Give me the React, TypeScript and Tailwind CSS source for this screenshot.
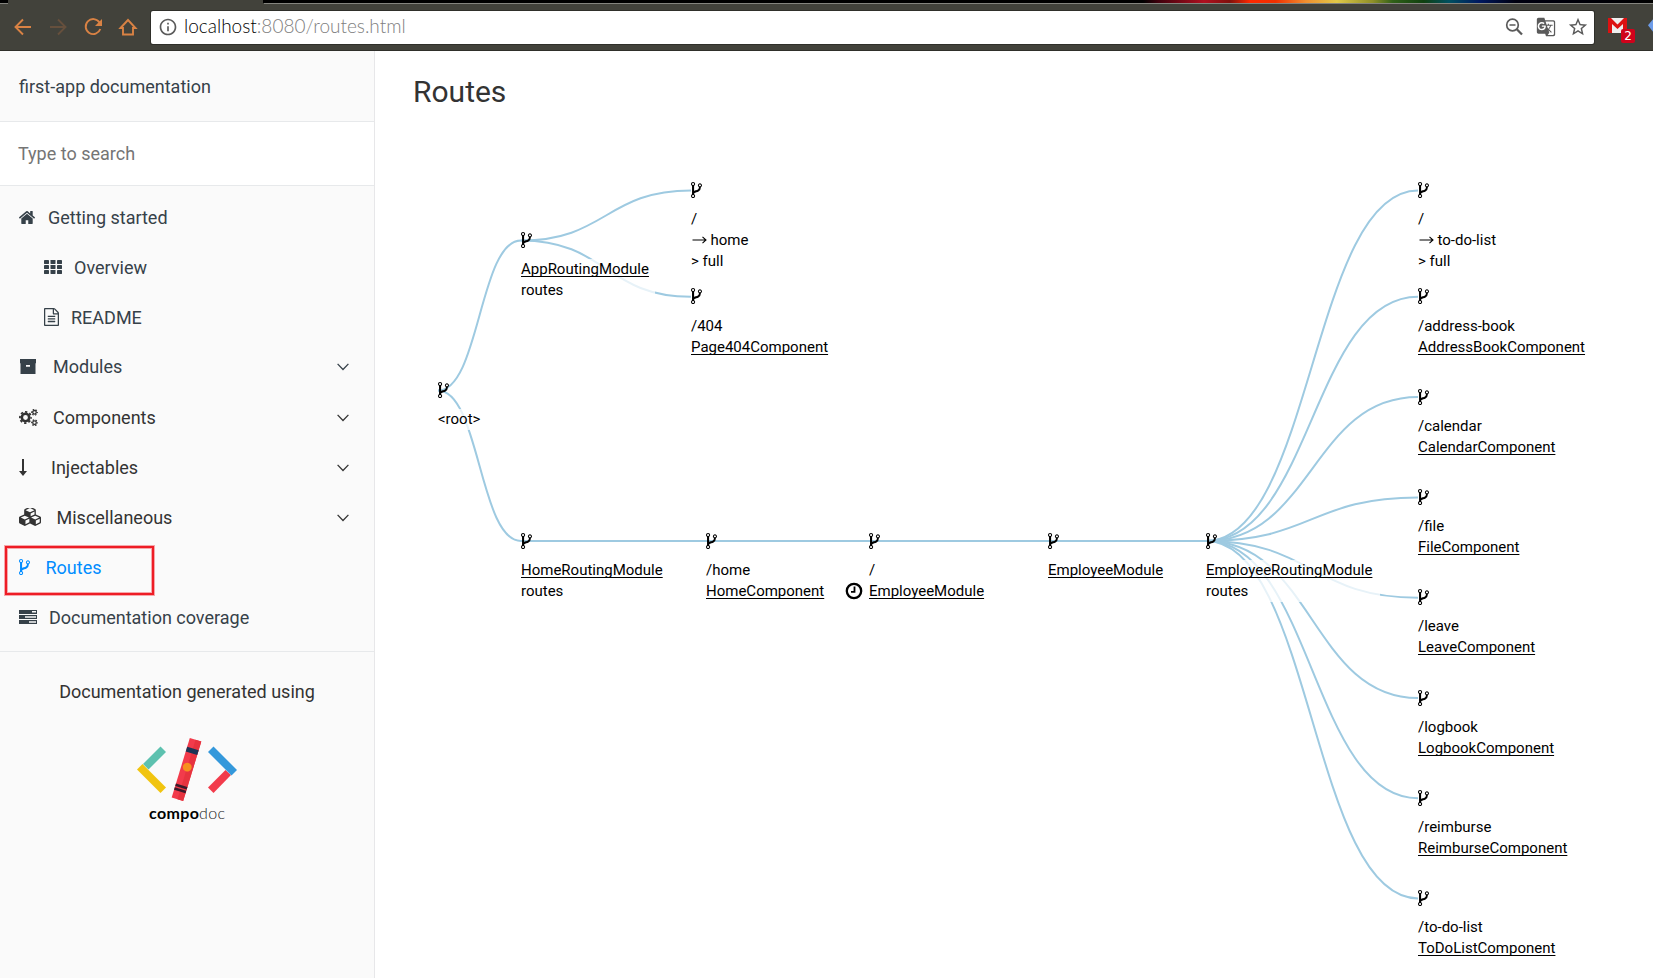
import React from "react";
import { MdInfoOutline, MdStarBorder, MdGTranslate } from "react-icons/md";

const FORK =
  "M672 1472q0-40-28-68t-68-28-68 28-28 68 28 68 68 28 68-28 28-68zm0-1152q0-40-28-68t-68-28-68 28-28 68 28 68 68 28 68-28 28-68zm640 128q0-40-28-68t-68-28-68 28-28 68 28 68 68 28 68-28 28-68zm96 0q0 52-26 96.5t-70 69.5q-2 287-226 414-67 38-203 81-128 40-169.5 71t-41.5 100v26q44 25 70 69.5t26 96.5q0 80-56 136t-136 56-136-56-56-136q0-52 26-96.5t70-69.5v-820q-44-25-70-69.5t-26-96.5q0-80 56-136t136-56 136 56 56 136q0 52-26 96.5t-70 69.5v497q54-26 154-57 55-17 87.5-29.5t70.5-31 59-39.5 40.5-51 28-69.5 8.5-91.5q-44-25-70-69.5t-26-96.5q0-80 56-136t136-56 136 56 56 136z";

function Fork({ className }: { className: string }) {
  return (
    <svg viewBox="384 128 1024 1536" className={className} fill="currentColor" preserveAspectRatio="none">
      <path d={FORK} />
    </svg>
  );
}

function HomeIcon() {
  return (
    <svg viewBox="89 246 1614 1290" preserveAspectRatio="none" className="h-[13px] w-4 shrink-0" fill="currentColor">
      <path d="M1472 992v480q0 26-19 45t-45 19h-384v-384h-256v384h-384q-26 0-45-19t-19-45v-480q0-1 .5-3t.5-3l575-474 575 474q1 2 1 6zm223-69l-62 74q-8 9-21 11h-3q-13 0-21-7l-692-577-692 577q-12 8-24 7-13-2-21-11l-62-74q-8-10-7-23.5t11-21.5l719-599q32-26 76-26t76 26l244 204v-195q0-14 9-23t23-9h192q14 0 23 9t9 23v408l219 182q10 8 11 21.5t-7 23.5z" />
    </svg>
  );
}

function GridIcon() {
  return (
    <svg viewBox="0 0 18 14" className="h-3.5 w-[18px] shrink-0" fill="currentColor">
      {[0, 5, 10].map((y) =>
        [0, 6.5, 13].map((x) => <rect key={`${x}-${y}`} x={x} y={y} width="5" height="4" rx="0.4" />)
      )}
    </svg>
  );
}

function FileIcon() {
  return (
    <svg viewBox="128 0 1536 1792" preserveAspectRatio="none" className="h-[18px] w-[15px] shrink-0" fill="currentColor">
      <path d="M1596 380q28 28 48 76t20 88v1152q0 40-28 68t-68 28h-1344q-40 0-68-28t-28-68v-1600q0-40 28-68t68-28h896q40 0 88 20t76 48zm-444-244v376h376q-10-29-22-41l-313-313q-12-12-41-22zm384 1528v-1024h-416q-40 0-68-28t-28-68v-416h-768v1536h1280zm-1024-864q0-14 9-23t23-9h704q14 0 23 9t9 23v64q0 14-9 23t-23 9h-704q-14 0-23-9t-9-23v-64zm736 224q14 0 23 9t9 23v64q0 14-9 23t-23 9h-704q-14 0-23-9t-9-23v-64q0-14 9-23t23-9h704zm0 256q14 0 23 9t9 23v64q0 14-9 23t-23 9h-704q-14 0-23-9t-9-23v-64q0-14 9-23t23-9h704z" />
    </svg>
  );
}

function ArchiveIcon() {
  return (
    <svg viewBox="0 0 16 15" className="ml-px h-[15px] w-4 shrink-0" fill="currentColor">
      <path fillRule="evenodd" d="M0 0h16v4H0zM.5 4.6h15V15H.5zM6 6v1.8h4V6z" />
      <path d="M.5 4h15v1H.5z" />
    </svg>
  );
}

function CogsIcon() {
  return (
    <svg viewBox="0 0 19 17" className="h-[17px] w-[19px] shrink-0" fill="none" stroke="currentColor">
      <circle cx="6.500" cy="8.500" r="3.700" strokeWidth="2.600" />
      <circle cx="6.500" cy="8.500" r="5.600" strokeWidth="1.800" strokeDasharray="2.300 2.098" strokeDashoffset="1.150" />
      {[3.3, 13.7].map((cy) => (
        <g key={cy}>
          <circle cx="15.500" cy={cy} r="1.800" strokeWidth="1.300" />
          <circle cx="15.500" cy={cy} r="2.800" strokeWidth="1.200" strokeDasharray="1.500 1.432" strokeDashoffset=".75" />
        </g>
      ))}
    </svg>
  );
}

function ArrowIcon() {
  return (
    <svg viewBox="0 0 8 17" className="h-[17px] w-2 shrink-0" fill="currentColor">
      <path d="M3 0h2v12h3L4 17 0 12h3z" />
    </svg>
  );
}

function CubesIcon() {
  return (
    <svg viewBox="0 118 2176 1674" preserveAspectRatio="none" className="h-[18px] w-[22px] shrink-0" fill="currentColor">
      <path d="M640 1632l384-192v-314l-384 164v342zm-64-454l404-173-404-173-404 173zm1088 454l384-192v-314l-384 164v342zm-64-454l404-173-404-173-404 173zm-448-293l384-165v-266l-384 164v267zm-64-379l441-189-441-189-441 189zm1088 518v416q0 36-19 67t-52 47l-448 224q-25 14-57 14t-57-14l-448-224q-4-2-7-4-2 2-7 4l-448 224q-25 14-57 14t-57-14l-448-224q-33-16-52-47t-19-67v-416q0-38 21.5-70t56.5-48l434-186v-400q0-38 21.5-70t56.5-48l448-192q23-10 50-10t50 10l448 192q35 16 56.5 48t21.5 70v400l434 186q36 16 57 48t21 70z" />
    </svg>
  );
}

function TasksIcon() {
  return (
    <svg viewBox="0 0 18 14" className="h-3.5 w-[18px] shrink-0" fill="currentColor">
      <path fillRule="evenodd" d="M0 0h18v4H0zM13 1v1.6h4V1zM0 5h18v4H0zM6 6.2v1.6h11V6.2zM0 10h18v4H0zM10 11.2v1.6h7v-1.6z" />
    </svg>
  );
}

function Chevron() {
  return (
    <svg viewBox="0 0 12 8" className="h-2 w-3 shrink-0" fill="none" stroke="currentColor" strokeWidth="1.3">
      <path d="M.6.9 6 6.5 11.4.9" />
    </svg>
  );
}

type Item = { label: string; icon: React.ReactNode; row: string; gap: string; chevron?: boolean };

const ITEMS: Item[] = [
  { label: "Getting started", icon: <HomeIcon />, row: "h-[50px] pl-[19px] text-[#364149]", gap: "w-[29px]" },
  { label: "Overview", icon: <GridIcon />, row: "h-[50px] pl-11 text-[#364149]", gap: "w-[30px]" },
  { label: "README", icon: <FileIcon />, row: "h-[50px] pl-11 text-[#364149]", gap: "w-[27px]" },
  { label: "Modules", icon: <ArchiveIcon />, row: "h-[49px] pl-[19px] text-[#364149]", gap: "w-[34px]", chevron: true },
  { label: "Components", icon: <CogsIcon />, row: "h-[51px] pt-px pl-[19px] text-[#333]", gap: "w-[34px]", chevron: true },
  { label: "Injectables", icon: <ArrowIcon />, row: "h-[50px] pl-[19px] text-[#333]", gap: "w-[32px]", chevron: true },
  { label: "Miscellaneous", icon: <CubesIcon />, row: "h-[50px] pl-[19px] text-[#333]", gap: "w-[37.5px]", chevron: true },
  { label: "Routes", icon: <Fork className="h-4 w-[11px] shrink-0" />, row: "h-[50px] pl-[19px] text-[#008cff]", gap: "w-[26.5px]" },
  { label: "Documentation coverage", icon: <TasksIcon />, row: "h-[50px] pl-[19px] text-[#364149]", gap: "w-[30px]" },
];

function Logo() {
  return (
    <svg viewBox="0 0 102 88" className="h-[88px] w-[102px]">
      <path d="M24.5 8.5 30 14 12.5 31.5 7 26z" fill="#5dc1af" />
      <path d="M6.500 26 1 31.500 24.500 55l5.500-5.500z" fill="#f1c40f" />
      <path d="M95 32 89.500 27 72 44.500l5.500 5.500z" transform="translate(0 5)" fill="#f23b4b" />
      <path d="M77.500 8.500 72 14l23.500 23.500L101 32z" fill="#3498db" />
      <g transform="translate(50.500 31.500) rotate(17)">
        <rect x="-6" y="-31" width="12" height="62" fill="#f23b4b" />
        <rect x="0" y="-31" width="6" height="62" fill="#e7333f" />
        <rect x="-6" y="-22" width="12" height="5" fill="#1a3556" />
        <rect x="-6" y="16.500" width="12" height="2.500" fill="#3b1a2b" />
        <rect x="-6" y="20.500" width="12" height="2.500" fill="#3b1a2b" />
        <circle cx="0" cy="-2.500" r="4.400" fill="#f7901e" />
      </g>
      <text x="13" y="81" fontFamily="Lato, sans-serif" fontSize="16" fontWeight="700" textLength="50" fill="#000">compo</text>
      <text x="63" y="81" fontFamily="Lato, sans-serif" fontSize="16" fontWeight="300" textLength="26" fill="#222">doc</text>
    </svg>
  );
}

type Line = { text: string; link?: boolean; lazy?: boolean; arrow?: boolean };
type TreeNode = { x: number; y: number; w: number; lines: Line[] };

const NODES: TreeNode[] = [
  { x: 438, y: 390.5, w: 50, lines: [{ text: "<root>" }] },
  { x: 521, y: 240.5, w: 134, lines: [{ text: "AppRoutingModule", link: true }, { text: "routes" }] },
  { x: 691, y: 190.5, w: 66, lines: [{ text: "/" }, { text: "home", arrow: true }, { text: "> full" }] },
  { x: 691, y: 296.8, w: 142, lines: [{ text: "/404" }, { text: "Page404Component", link: true }] },
  { x: 521, y: 541, w: 150, lines: [{ text: "HomeRoutingModule", link: true }, { text: "routes" }] },
  { x: 706, y: 541, w: 127, lines: [{ text: "/home" }, { text: "HomeComponent", link: true }] },
  { x: 869, y: 541, w: 124, lines: [{ text: "/" }, { text: "EmployeeModule", link: true, lazy: true }] },
  { x: 1048, y: 541, w: 124, lines: [{ text: "EmployeeModule", link: true }] },
  { x: 1206, y: 541, w: 174, lines: [{ text: "EmployeeRoutingModule", link: true }, { text: "routes" }] },
  { x: 1418, y: 190.5, w: 88, lines: [{ text: "/" }, { text: "to-do-list", arrow: true }, { text: "> full" }] },
  { x: 1418, y: 296.8, w: 176, lines: [{ text: "/address-book" }, { text: "AddressBookComponent", link: true }] },
  { x: 1418, y: 397.1, w: 146, lines: [{ text: "/calendar" }, { text: "CalendarComponent", link: true }] },
  { x: 1418, y: 497.4, w: 110, lines: [{ text: "/file" }, { text: "FileComponent", link: true }] },
  { x: 1418, y: 597.7, w: 126, lines: [{ text: "/leave" }, { text: "LeaveComponent", link: true }] },
  { x: 1418, y: 698, w: 146, lines: [{ text: "/logbook" }, { text: "LogbookComponent", link: true }] },
  { x: 1418, y: 798.2, w: 158, lines: [{ text: "/reimburse" }, { text: "ReimburseComponent", link: true }] },
  { x: 1418, y: 898.4, w: 148, lines: [{ text: "/to-do-list" }, { text: "ToDoListComponent", link: true }] },
];

const EDGES: [number, number][] = [
  [0, 1], [1, 2], [1, 3], [0, 4], [4, 5], [5, 6], [6, 7], [7, 8],
  [8, 9], [8, 10], [8, 11], [8, 12], [8, 13], [8, 14], [8, 15], [8, 16],
];

// Node coordinates are given in window space; the canvas starts at (375, 51).
const OX = 375;
const OY = 51;

function edgePath([a, b]: [number, number]) {
  const s = NODES[a];
  const t = NODES[b];
  const m = (s.x + t.x) / 2 - OX;
  return `M${s.x - OX} ${s.y - OY}C${m} ${s.y - OY} ${m} ${t.y - OY} ${t.x - OX} ${t.y - OY}`;
}

function RouteTree() {
  return (
    <div className="absolute inset-0">
      <svg className="absolute inset-0 h-full w-full" fill="none" stroke="#9ecae1" strokeWidth="2">
        {EDGES.map((e) => (
          <path key={e.join("-")} d={edgePath(e)} />
        ))}
      </svg>
      {NODES.map((n, i) => (
        <div key={i} className="absolute" style={{ left: n.x - OX, top: Math.round(n.y - OY - 8.5) }}>
          <Fork className="block h-4 w-[11px]" />
          <div
            className={`bg-white/75 text-[15px] leading-[21px] whitespace-nowrap ${n.y === 296.8 ? "mt-3" : "mt-[11px]"}`}
            style={{ width: n.w }}
          >
            {n.lines.map((l) => (
              <div key={l.text} className="relative flex h-[21px]">
                {l.lazy && (
                  <svg viewBox="0 0 18 18" className="absolute top-px -left-6 h-[18px] w-[18px]" fill="none" stroke="currentColor">
                    <circle cx="9" cy="9" r="7.200" strokeWidth="2.300" />
                    <path d="M9.500 4.500V9.800H6" strokeWidth="1.800" />
                  </svg>
                )}
                {l.arrow && (
                  <svg viewBox="0 0 15 8" className="mt-[6px] mr-1 ml-[0.500px] h-2 w-[15px] shrink-0" fill="none" stroke="currentColor" strokeWidth="1.100">
                    <path d="M.5 4H14M10.500.8 14 4l-3.500 3.200" />
                  </svg>
                )}
                <span className={l.link ? "underline decoration-1 underline-offset-2 [text-decoration-skip-ink:none]" : ""}>{l.text}</span>
              </div>
            ))}
          </div>
        </div>
      ))}
    </div>
  );
}

function BrowserBar() {
  return (
    <header className="flex h-[51px] shrink-0 flex-col bg-[#42423b]">
      <div className="flex h-[3px] bg-black">
        <div className="w-2" />
        <div className="w-[255px] bg-[#42423b]" />
        <div className="w-[880px]" />
        <div className="flex-1 bg-[linear-gradient(90deg,#000,#40000c_3%,#b01020_12%,#80100c_17%,#ff2800_21%,#f03000_26%,#f09030_32%,#e0c848_38%,#909028_45%,#306018_49%,#104010_55%,#005060_60%,#001860_66%,#000010_73%,#000)]" />
      </div>
      <div className="flex h-px bg-[#85857f]">
        <div className="ml-2 w-[256px] bg-[#42423b]" />
      </div>
      <div className="flex h-[47px] items-center border-b border-[#2f2f2a]">
        <svg viewBox="0 0 140 24" className="ml-2 h-6 w-[140px] shrink-0" fill="none" stroke="#d98244" strokeWidth="1.900">
          <path d="M23 12H8M15 4.500 7.500 12l7.500 7.500" />
          <path d="M42 12h15M50 4.500 57.500 12 50 19.500" stroke="#66503d" />
          <path d="M91.500 7.500A7.500 7.500 0 1 0 92.300 14" />
          <path d="M94 4v7h-7z" fill="#d98244" stroke="none" />
          <path d="M112.500 13 120 5l7.500 8H125v6.500h-10V13z" />
        </svg>
        <div className="ml-[3px] flex h-[33px] w-[1443px] shrink-0 items-center rounded-[2px] bg-white pr-[5px] pl-[7px] shadow-[0_0_0_1px_#2f2f2a]">
          <MdInfoOutline className="size-5 text-[#5a5a5a]" />
          <div className="-mt-0.5 ml-1.5 font-[Lato] text-[19px] leading-6 font-light text-black">
            localhost<span className="text-[#808080]">:8080/routes.html</span>
          </div>
          <div className="ml-auto flex items-center gap-[11px] text-[#5a5a5a]">
            <svg viewBox="0 0 20 20" className="mr-px h-5 w-5" fill="none" stroke="currentColor">
              <circle cx="8.500" cy="8" r="5.800" strokeWidth="1.700" />
              <path d="M5.500 8h6" strokeWidth="1.500" />
              <path d="M12.800 12.300 18 17.500" strokeWidth="2.300" />
            </svg>
            <MdGTranslate className="size-5" />
            <MdStarBorder className="size-[22px]" />
          </div>
        </div>
        <div className="relative mt-[5px] ml-[14px] h-6 w-7 shrink-0">
          <svg viewBox="0 0 19 15" className="block h-[15px] w-[19px]">
            <path d="M0 0h19v15H0z" fill="#eee" />
            <path d="M0 15V0h3l6.500 6.500L16 0h3v15h-4V6L9.500 11 4 6v9z" fill="#dd1111" />
          </svg>
          <span className="absolute top-[11px] left-[13px] h-3.5 w-3.5 rounded-[2px] bg-[#d0021b] text-center font-['DejaVu_Sans'] text-[12px] leading-3.5 text-white">
            2
          </span>
        </div>
        <svg viewBox="0 0 6 16" className="mb-0.5 ml-3 h-4 w-[5px] shrink-0">
          <path d="M6 0 0 7l6 8z" fill="#6c9be8" />
        </svg>
      </div>
    </header>
  );
}

export default function App() {
  return (
    <div className="flex h-[978px] w-[1653px] flex-col overflow-hidden bg-white font-[Roboto] text-black">
      <BrowserBar />
      <div className="flex min-h-0 flex-1">
        <aside className="relative flex w-[375px] shrink-0 flex-col border-r border-[#e7e7e9] bg-[#fafafa] text-[18px] text-[#333]">
          <div className="flex h-[71px] items-center border-b border-[#e7e9eb] pl-[19px] text-[#364149]">first-app documentation</div>
          <div className="flex h-16 items-center border-b border-[#e7e9eb] bg-white pl-[18px] text-[#757575]">Type to search</div>
          <nav className="flex h-[466px] flex-col border-b border-[#e7e9eb] pt-1.5">
            {ITEMS.map((it) => (
              <div key={it.label} className={`flex shrink-0 items-center ${it.row}`}>
                <span className={`flex shrink-0 items-center ${it.gap}`}>{it.icon}</span>
                <span>{it.label}</span>
                {it.chevron && (
                  <span className="mt-px mr-[25.5px] ml-auto">
                    <Chevron />
                  </span>
                )}
              </div>
            ))}
          </nav>
          <div className="flex flex-col items-center pt-[26px]">
            <div>Documentation generated using</div>
            <div className="mt-[33px]">
              <Logo />
            </div>
          </div>
          <div className="absolute top-[495px] left-[5px] h-[49px] w-[149px] border-2 border-[#ee1c25] shadow-[0_0_0_1px_#ee1c2560,inset_0_0_0_1px_#ee1c2560]" />
        </aside>
        <main className="relative min-w-0 flex-1">
          <h1 className="pt-[22px] pl-[38px] text-[30px] leading-[38px] text-[#333]">Routes</h1>
          <RouteTree />
        </main>
      </div>
    </div>
  );
}
